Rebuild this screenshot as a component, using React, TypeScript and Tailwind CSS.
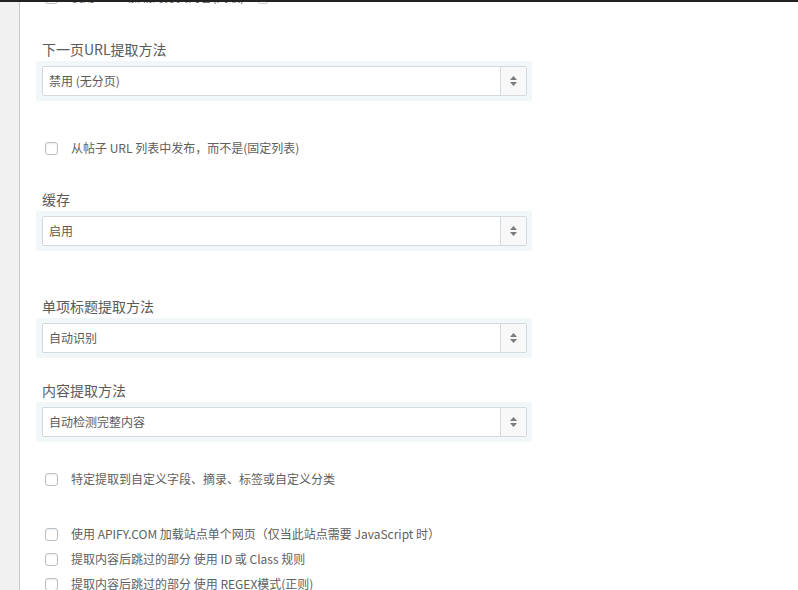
const FONT = "font-['Noto_Sans_CJK_SC','Liberation_Sans',sans-serif]";

const Checkbox = ({ label, className = "" }: { label: string; className?: string }) => (
  <div className={`flex h-[20px] items-center ${className}`}>
    <span className="ml-[3px] h-[13px] w-[13px] shrink-0 rounded-[3px] border border-[#b9c0c6] bg-white shadow-[inset_0_1px_2px_rgba(0,0,0,0.08)]" />
    <span className="ml-[13px] text-[12px] leading-[20px] text-[#606060]">{label}</span>
  </div>
);

const Field = ({ label, value, className = "" }: { label: string; value: string; className?: string }) => (
  <div className={className}>
    <div className="h-[20px] text-[14px] leading-[20px] text-[#5a5a5a]">{label}</div>
    <div className="-ml-[6px] mt-[2px] w-[496px] rounded-[3px] bg-[#f1f6f9] py-[5px] pl-[6px] pr-[5px]">
      <div className="flex h-[30px] items-stretch rounded-[2px] border border-[#d4d9dd] bg-white">
        <div className="flex flex-1 items-center pl-[6px] text-[12px] text-[#5a5a5a]">{value}</div>
        <div className="flex w-[26px] flex-col items-center justify-center gap-[2px] border-l border-[#d4d9dd] bg-[#f8f8f8]">
          <svg width="7" height="4" viewBox="0 0 7 4">
            <path d="M0 4 L3.5 0 L7 4 Z" fill="#7a7a7a" />
          </svg>
          <svg width="7" height="4" viewBox="0 0 7 4">
            <path d="M0 0 L3.5 4 L7 0 Z" fill="#7a7a7a" />
          </svg>
        </div>
      </div>
    </div>
  </div>
);

export default function App() {
  return (
    <div className={`flex h-[590px] w-[798px] flex-col overflow-hidden bg-white ${FONT}`}>
      <div className="relative z-10 h-[2px] shrink-0 bg-[#222]" />
      <div className="flex flex-1">
        <div className="w-[20px] shrink-0 border-r border-[#c9c9c9] bg-[#f1f1f1]" />
        <div className="flex flex-1 flex-col pl-[22px]">
          <div className="-mt-[15px] flex items-center">
            <Checkbox label="使用 AJAX 加载的分页内容(高级)" />
            <span className="ml-[14px] h-[13px] w-[10px] rounded-[2px] border border-[#ccc]" />
          </div>
          <Field className="mt-[32px]" label="下一页URL提取方法" value="禁用 (无分页)" />
          <Checkbox className="mt-[37px]" label="从帖子 URL 列表中发布，而不是(固定列表)" />
          <Field className="mt-[31px]" label="缓存" value="启用" />
          <Field className="mt-[45px]" label="单项标题提取方法" value="自动识别" />
          <Field className="mt-[22px]" label="内容提取方法" value="自动检测完整内容" />
          <Checkbox className="mt-[27px]" label="特定提取到自定义字段、摘录、标签或自定义分类" />
          <Checkbox className="mt-[35px]" label="使用 APIFY.COM 加载站点单个网页（仅当此站点需要 JavaScript 时）" />
          <Checkbox className="mt-[5px]" label="提取内容后跳过的部分 使用 ID 或 Class 规则" />
          <Checkbox className="mt-[5px]" label="提取内容后跳过的部分 使用 REGEX模式(正则)" />
        </div>
      </div>
    </div>
  );
}
